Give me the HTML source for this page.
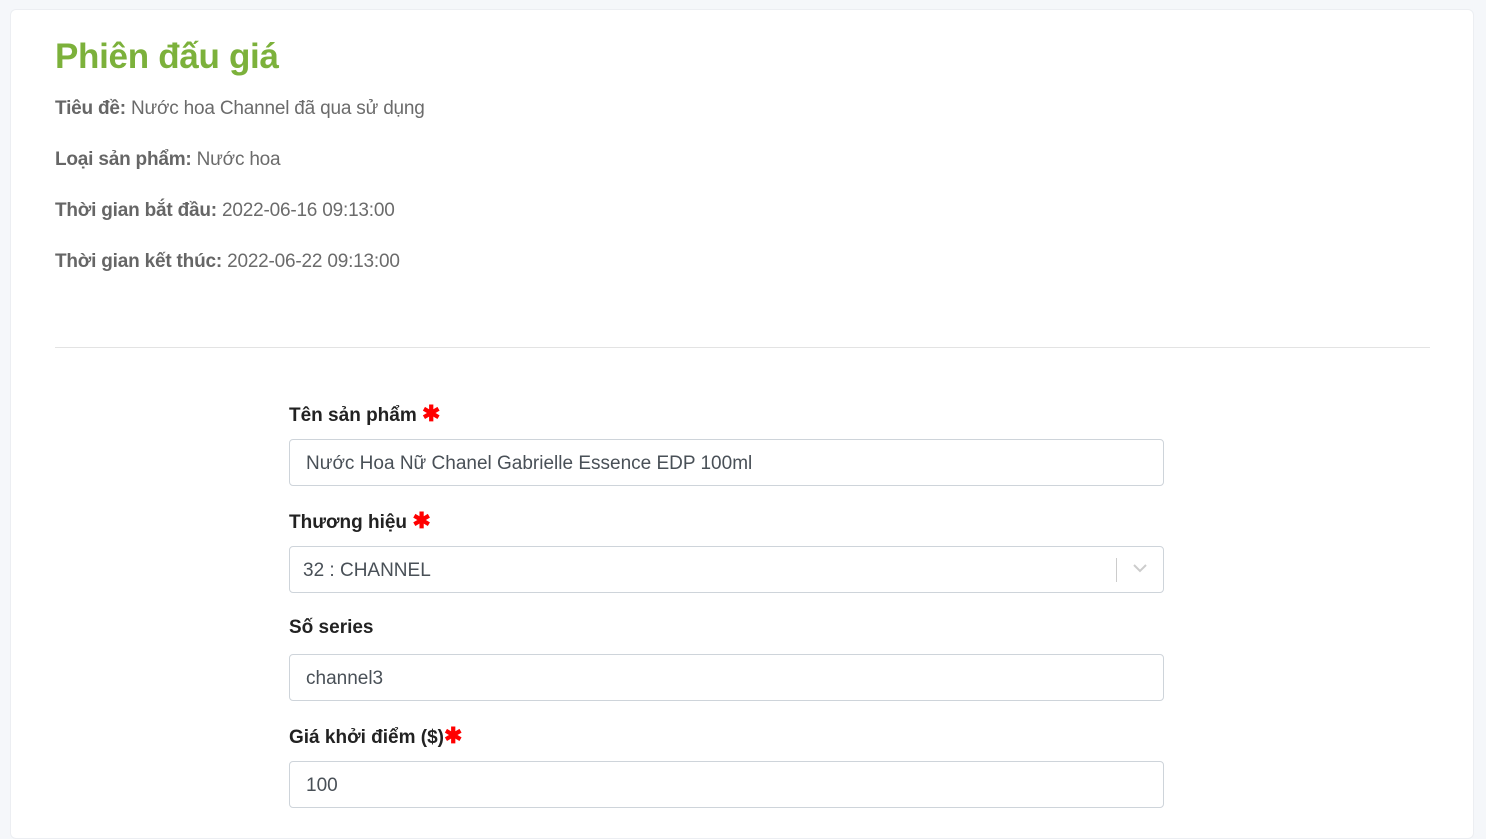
<!DOCTYPE html>
<html><head><meta charset="utf-8"><style>
*{box-sizing:border-box;margin:0;padding:0}
body{width:1486px;height:818px;background:#f5f7fa;font-family:"Liberation Sans",sans-serif;overflow:hidden;position:relative}
.card{position:absolute;left:10px;top:9px;width:1464px;height:830px;background:#fff;border:1px solid #eceef2;border-radius:6px}
h1{position:absolute;left:44px;top:27px;font-size:35px;font-weight:bold;color:#7cb13b;letter-spacing:-0.3px}
.info{position:absolute;left:44px;font-size:19px;color:#6b6b6b;letter-spacing:-0.2px}
.info b{color:#666}
hr{position:absolute;left:44px;top:337px;width:1375px;border:0;border-top:1px solid #e3e3e3}
.lbl{position:absolute;left:278px;font-size:19px;font-weight:bold;color:#222}
.star{color:#f00;font-size:22px}
.inp{position:absolute;left:278px;width:875px;height:47px;border:1px solid #ced4da;border-radius:4px;font-size:19px;color:#495057;padding:13px 16px}
.sel .bar{position:absolute;right:46px;top:11px;width:1px;height:24px;background:#ccc}
.sel svg{position:absolute;right:16px;top:17px}
</style></head><body>
<div class="card">
<h1>Phiên đấu giá</h1>
<div class="info" style="top:88px"><b>Tiêu đề:</b> Nước hoa Channel đã qua sử dụng</div>
<div class="info" style="top:139px"><b>Loại sản phẩm:</b> Nước hoa</div>
<div class="info" style="top:190px"><b>Thời gian bắt đầu:</b> 2022-06-16 09:13:00</div>
<div class="info" style="top:241px"><b>Thời gian kết thúc:</b> 2022-06-22 09:13:00</div>
<hr>
<div class="lbl" style="top:391px">Tên sản phẩm <span class="star">✱</span></div>
<div class="inp" style="top:429px">Nước Hoa Nữ Chanel Gabrielle Essence EDP 100ml</div>
<div class="lbl" style="top:498px">Thương hiệu <span class="star">✱</span></div>
<div class="inp sel" style="top:536px;padding-left:13px">32 : CHANNEL<div class="bar"></div><svg width="14" height="9" viewBox="0 0 14 9"><path d="M1 1l6 6 6-6" fill="none" stroke="#ccc" stroke-width="2"/></svg></div>
<div class="lbl" style="top:607px">Số series</div>
<div class="inp" style="top:644px">channel3</div>
<div class="lbl" style="top:713px">Giá khởi điểm ($)<span class="star">✱</span></div>
<div class="inp" style="top:751px">100</div>
</div>
</body></html>
